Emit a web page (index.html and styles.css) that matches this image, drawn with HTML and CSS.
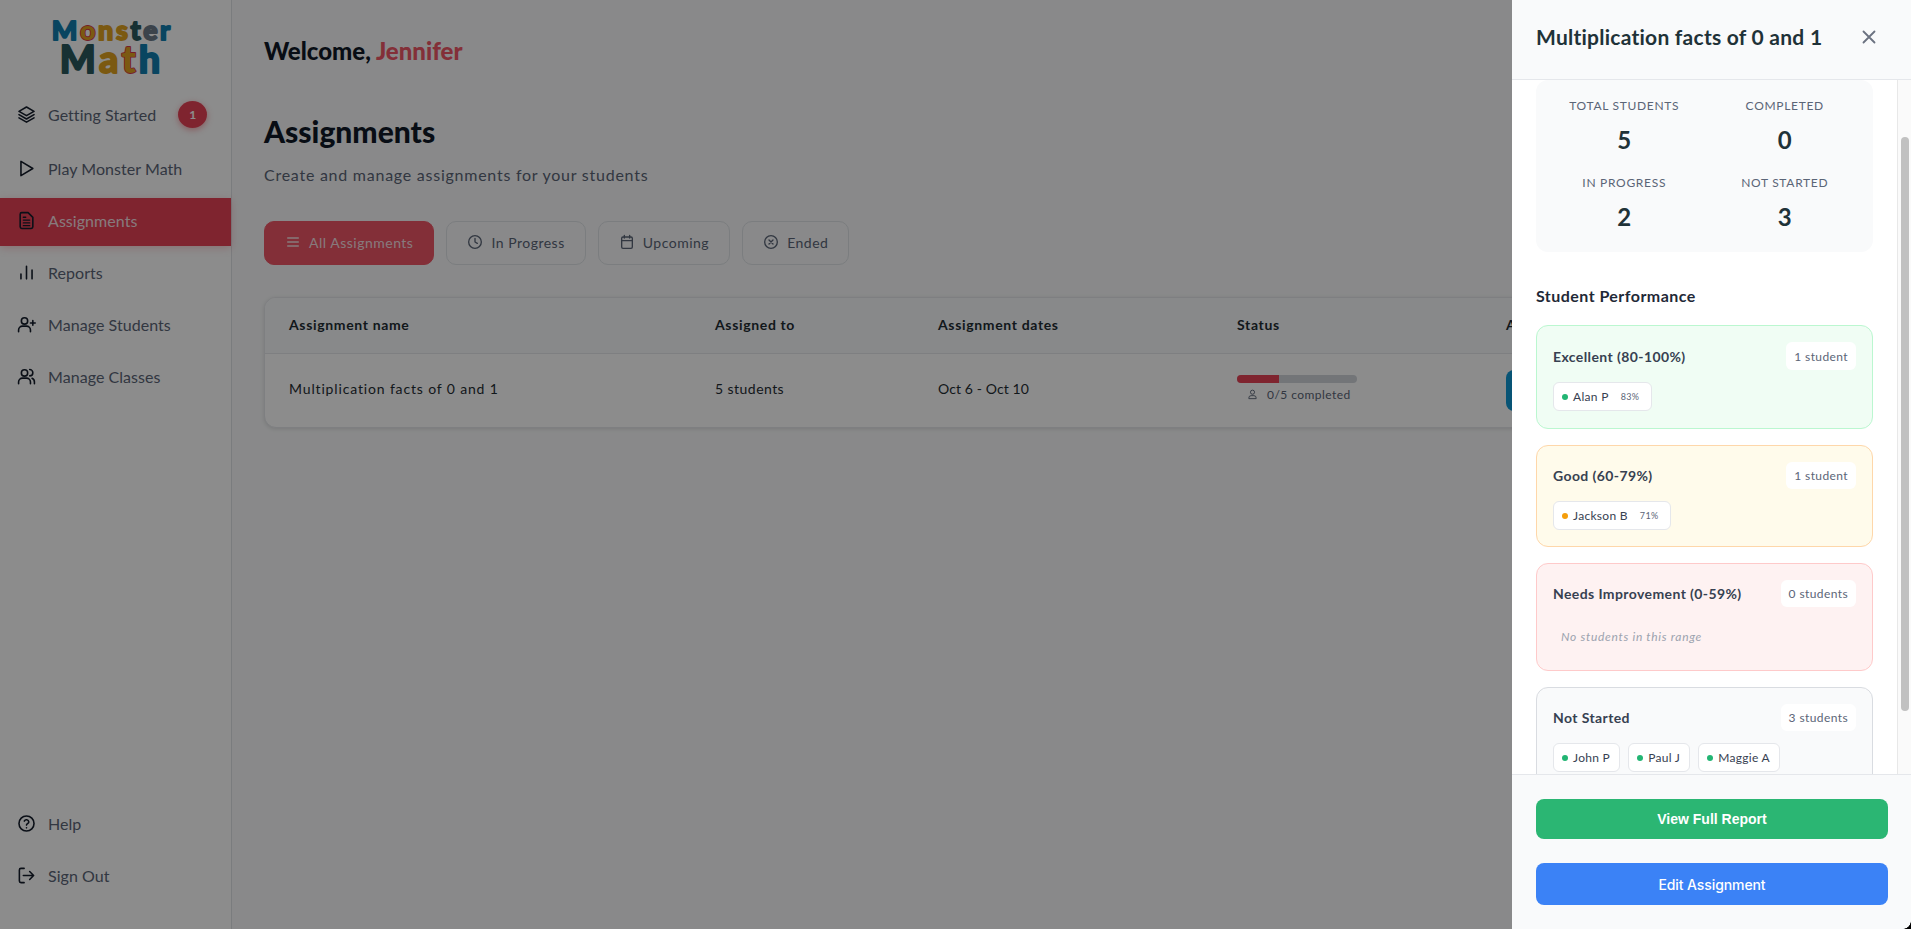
FILE: index.html
```html
<!DOCTYPE html>
<html lang="en">
<head>
<meta charset="utf-8">
<title>Monster Math - Assignments</title>
<link rel="stylesheet" href="styles.css">
</head>
<body>
<div class="app">
  <aside class="sidebar">
    <svg class="logo" viewBox="0 0 232 92" role="img" aria-label="Monster Math">
      <text class="logo-top" x="52" y="40" textLength="119" lengthAdjust="spacing"><tspan class="c-blue">M</tspan><tspan class="c-red">o</tspan><tspan class="c-gold">n</tspan><tspan class="c-gold">s</tspan><tspan class="c-teal">t</tspan><tspan class="c-gray">e</tspan><tspan class="c-blue">r</tspan></text>
      <text class="logo-bottom" x="60" y="73" textLength="101" lengthAdjust="spacing"><tspan class="c-teal">M</tspan><tspan class="c-gold">a</tspan><tspan class="c-red">t</tspan><tspan class="c-blue">h</tspan></text>
    </svg>
    <nav class="nav">
      <a class="nav-item nav-first"><svg class="ico" viewBox="0 0 24 24"><path d="M12 2.5 21.5 8 12 13.5 2.5 8Z"/><path d="M2.5 12.2 12 17.7l9.5-5.5"/><path d="M2.5 16.2 12 21.7l9.5-5.5"/></svg><span>Getting Started</span><b class="nav-badge">1</b></a>
      <a class="nav-item"><svg class="ico" viewBox="0 0 24 24"><path d="M5 3v18l15-9Z"/></svg><span>Play Monster Math</span></a>
      <a class="nav-item active"><svg class="ico ico-doc" viewBox="0 0 24 24"><path class="doc" d="M4 4a2 2 0 0 1 2-2h8l6 6v12a2 2 0 0 1-2 2H6a2 2 0 0 1-2-2Z"/><path class="doc-line" d="M8 11.5h8M8 15h8M8 18.500h8M8 8h3"/></svg><span>Assignments</span></a>
      <a class="nav-item"><svg class="ico" viewBox="0 0 24 24"><path d="M5 20v-6M12 20V4M19 20V9"/></svg><span>Reports</span></a>
      <a class="nav-item"><svg class="ico" viewBox="0 0 24 24"><circle cx="9.500" cy="7.500" r="4"/><path d="M2 21v-2a5 5 0 0 1 5-5h5a5 5 0 0 1 5 5v2"/><path d="M20 7v6M17 10h6"/></svg><span>Manage Students</span></a>
      <a class="nav-item"><svg class="ico" viewBox="0 0 24 24"><circle cx="9.500" cy="7.500" r="4"/><path d="M2 21v-2a5 5 0 0 1 5-5h5a5 5 0 0 1 5 5v2"/><path d="M16 3.200a4 4 0 0 1 0 8M19 14.200a5 5 0 0 1 3 4.800v2"/></svg><span>Manage Classes</span></a>
    </nav>
    <nav class="nav nav-bottom">
      <a class="nav-item"><svg class="ico" viewBox="0 0 24 24"><circle cx="12" cy="12" r="9.500"/><path d="M9.200 9a3 3 0 0 1 5.700 1c0 2-2.900 2.500-2.900 4"/><path d="M12 17.500h.01"/></svg><span>Help</span></a>
      <a class="nav-item"><svg class="ico" viewBox="0 0 24 24"><path d="M9 3H5a2 2 0 0 0-2 2v14a2 2 0 0 0 2 2h4"/><path d="M8 12h13M16 7l5 5-5 5"/></svg><span>Sign Out</span></a>
    </nav>
  </aside>

  <main class="main">
    <h2 class="welcome">Welcome, <span class="accent">Jennifer</span></h2>
    <h1 class="title">Assignments</h1>
    <p class="subtitle">Create and manage assignments for your students</p>
    <div class="tabs">
      <button class="tab tab-on"><svg class="tab-ico" viewBox="0 0 24 24"><path d="M4 6h16M4 12h16M4 18h16"/></svg>All Assignments</button>
      <button class="tab"><svg class="tab-ico" viewBox="0 0 24 24"><circle cx="12" cy="12" r="9.500"/><path d="M12 6.500V12l3.500 2"/></svg>In Progress</button>
      <button class="tab"><svg class="tab-ico" viewBox="0 0 24 24"><rect x="4" y="4.500" width="16" height="17" rx="2"/><path d="M8 2v4M16 2v4M4 10h16"/></svg>Upcoming</button>
      <button class="tab"><svg class="tab-ico" viewBox="0 0 24 24"><circle cx="12" cy="12" r="9.500"/><path d="m9 9 6 6M15 9l-6 6"/></svg>Ended</button>
    </div>
    <section class="table">
      <div class="row row-head">
        <div>Assignment name</div><div>Assigned to</div><div>Assignment dates</div><div>Status</div><div>Actions</div>
      </div>
      <div class="row row-body">
        <div class="cell-name">Multiplication facts of 0 and 1</div>
        <div>5 students</div>
        <div class="cell-dates">Oct 6 - Oct 10</div>
        <div class="status">
          <div class="bar"><div class="bar-fill"></div></div>
          <div class="status-text"><svg class="mini-ico" viewBox="0 0 24 24"><circle cx="12" cy="7" r="4.500"/><path d="M4 21v-1.500a5 5 0 0 1 5-5h6a5 5 0 0 1 5 5V21Z"/></svg>0/5 completed</div>
        </div>
        <div><button class="row-action">View</button></div>
      </div>
    </section>
  </main>
</div>

<div class="overlay"></div>

<aside class="panel">
  <header class="panel-head">
    <h2 class="panel-title">Multiplication facts of 0 and 1</h2>
    <svg class="close" viewBox="0 0 24 24"><path d="M6 6l12 12M18 6 6 18"/></svg>
  </header>
  <div class="panel-body">
    <div class="panel-content">
      <div class="stats">
        <div class="stat"><div class="stat-label">TOTAL STUDENTS</div><div class="stat-value">5</div></div>
        <div class="stat"><div class="stat-label">COMPLETED</div><div class="stat-value">0</div></div>
        <div class="stat"><div class="stat-label">IN PROGRESS</div><div class="stat-value">2</div></div>
        <div class="stat"><div class="stat-label">NOT STARTED</div><div class="stat-value">3</div></div>
      </div>
      <h3 class="perf-title">Student Performance</h3>
      <div class="card card-green">
        <div class="card-head"><h4>Excellent (80-100%)</h4><span class="count">1 student</span></div>
        <div class="chips"><span class="chip"><i class="dot"></i>Alan P<small>83%</small></span></div>
      </div>
      <div class="card card-yellow">
        <div class="card-head"><h4>Good (60-79%)</h4><span class="count">1 student</span></div>
        <div class="chips"><span class="chip"><i class="dot dot-orange"></i>Jackson B<small>71%</small></span></div>
      </div>
      <div class="card card-red">
        <div class="card-head"><h4>Needs Improvement (0-59%)</h4><span class="count">0 students</span></div>
        <p class="empty">No students in this range</p>
      </div>
      <div class="card card-gray">
        <div class="card-head"><h4>Not Started</h4><span class="count">3 students</span></div>
        <div class="chips"><span class="chip"><i class="dot"></i>John P</span><span class="chip"><i class="dot"></i>Paul J</span><span class="chip"><i class="dot"></i>Maggie A</span></div>
      </div>
    </div>
    <div class="scroll-track"><div class="scroll-thumb"></div></div>
  </div>
  <footer class="panel-foot">
    <button class="foot-btn btn-green">View Full Report</button>
    <button class="foot-btn btn-blue">Edit Assignment</button>
  </footer>
  <div class="corner"></div>
</aside>
</body>
</html>
```
FILE: styles.css
```css
* { box-sizing: border-box; }
html, body { margin: 0; height: 100%; overflow: hidden; }
body { font-family: "Lato", "Noto Sans", sans-serif; color: #1f2d33; background: #f9fafb; }
h1, h2, h3, h4, p { margin: 0; }
button { font-family: inherit; border: 0; padding: 0; }

.app { display: flex; height: 929px; }

.sidebar { width: 232px; flex: none; display: flex; flex-direction: column; background: #fff; border-right: 1px solid #dfe2e6; padding-bottom: 28px; }
.logo { display: block; width: 231px; height: 92px; flex: none; font-family: "Lato", sans-serif; font-weight: 900; }
.logo text { stroke-width: 1.800; stroke-linejoin: round; paint-order: stroke; }
.logo-top { font-size: 27px; }
.logo-bottom { font-size: 38px; }
.c-blue { fill: #127fb0; stroke: #127fb0; }
.c-red { fill: #e0a31f; stroke: #d83a4a; }
.c-gold { fill: #e0a31f; stroke: #e0a31f; }
.c-teal { fill: #2a5a5e; stroke: #2a5a5e; }
.c-gray { fill: #6c7a89; stroke: #6c7a89; }

.nav { display: flex; flex-direction: column; gap: 4px; }
.nav-bottom { margin-top: auto; }
.nav-item { height: 48px; display: flex; align-items: center; gap: 12px; padding: 0 0 3px 17px; font-size: 16px; color: #5b6577; letter-spacing: .05px; }
.nav-first { height: 50px; padding-bottom: 5px; }
.ico { width: 19px; height: 19px; flex: none; fill: none; stroke: #141d2b; stroke-width: 2; stroke-linecap: round; stroke-linejoin: round; }
.nav-badge { margin-left: 10px; width: 29px; height: 27px; border-radius: 50%; background: #e74357; color: #fff; font-size: 12px; font-weight: 700; display: flex; align-items: center; justify-content: center; box-shadow: 0 2px 6px rgba(230,57,70,.45); }
.active { background: #e74357; color: #f6dfe2; box-shadow: 0 2px 8px rgba(230,57,70,.25); width: 231px; }
.doc { fill: #e74357; }
.doc-line { stroke-width: 1.800; }

.main { flex: 1; min-width: 0; padding: 35px 32px 0; }
.welcome { font-size: 24px; line-height: 32px; font-weight: 900; color: #101827; }
.accent { color: #ef5666; }
.title { margin-top: 44px; font-size: 30px; line-height: 40px; font-weight: 900; color: #101827; }
.subtitle { margin-top: 12px; font-size: 16px; line-height: 24px; color: #5b6577; letter-spacing: .75px; }

.tabs { margin-top: 34px; display: flex; gap: 12px; }
.tab { height: 44px; display: flex; align-items: center; gap: 8px; padding: 0 20px 2px; border: 1px solid #e0e3e8; border-radius: 10px; background: #f9fafb; font-size: 14px; color: #5b6577; letter-spacing: .5px; }
.tab-on { background: #ef5666; border-color: #ef5666; color: #f6dfe2; }
.tab-ico { width: 16px; height: 16px; flex: none; fill: none; stroke: currentColor; stroke-width: 2; stroke-linecap: round; stroke-linejoin: round; }

.table { margin-top: 32px; background: #fff; border: 1px solid #e5e7eb; border-radius: 12px; box-shadow: 0 1px 4px rgba(0,0,0,.12); overflow: hidden; }
.row { display: grid; grid-template-columns: 426px 223px 299px 269px 1fr; align-items: center; padding-left: 24px; font-size: 14px; color: #1f2d33; letter-spacing: .45px; }
.row-head { height: 56px; padding-bottom: 2px; background: #f8fafc; border-bottom: 1px solid #e5e7eb; font-weight: 700; letter-spacing: .65px; }
.row-body { height: 73px; padding-bottom: 4px; }
.cell-name { letter-spacing: .85px; }
.cell-dates { letter-spacing: .1px; }
.bar { width: 120px; height: 8px; border-radius: 4px; background: #d1d5db; overflow: hidden; }
.bar-fill { width: 42px; height: 100%; background: #e74357; }
.status-text { margin-top: 4px; padding-left: 10px; display: flex; align-items: center; gap: 9px; font-size: 12px; color: #5b6577; }
.mini-ico { width: 11px; height: 11px; fill: none; stroke: #5b6577; stroke-width: 2; }
.row-action { display: block; margin-top: 4px; width: 90px; height: 41px; border-radius: 8px; background: #1099d6; color: #fff; }

.overlay { position: fixed; inset: 0; background: rgba(0,0,0,.45); }

.panel { position: fixed; top: 0; right: 0; bottom: 0; width: 399px; display: flex; flex-direction: column; background: #fff; }
.panel-head { height: 80px; flex: none; display: flex; align-items: center; justify-content: space-between; padding: 0 31px 6px 24px; background: #f9fafb; border-bottom: 1px solid #e5e7eb; }
.panel-title { font-size: 21px; line-height: 28px; font-weight: 700; color: #1f3238; letter-spacing: .25px; }
.close { width: 22px; height: 22px; fill: none; stroke: #6b7280; stroke-width: 2; stroke-linecap: round; }

.panel-body { flex: 1; min-height: 0; display: flex; overflow: hidden; }
.panel-content { flex: 1; min-width: 0; padding: 0 24px; overflow: hidden; }
.scroll-track { position: relative; width: 14px; flex: none; background: #fafafa; border-left: 1px solid #e8e8e8; }
.scroll-thumb { position: absolute; top: 57px; left: 3px; width: 8px; height: 574px; border-radius: 4px; background: #c1c1c1; }

.stats { display: grid; grid-template-columns: 1fr 1fr; gap: 13px 16px; padding: 16px 16px 15px; background: #f9fafb; border-radius: 12px; text-align: center; }
.stat-label { font-size: 12px; line-height: 20px; color: #5b6577; letter-spacing: .7px; }
.stat-value { margin-top: 4px; font-size: 24px; line-height: 40px; font-weight: 700; color: #1f3238; }

.perf-title { margin: 32px 0 17px; font-size: 16px; line-height: 24px; font-weight: 700; color: #1f2937; letter-spacing: .45px; }

.card { margin-bottom: 16px; padding: 16px; border: 1px solid; border-radius: 12px; }
.card-green { background: #f0fdf4; border-color: #bbf7d0; padding-bottom: 17px; }
.card-yellow { background: #fffbeb; border-color: #fed7aa; }
.card-red { background: #fef2f2; border-color: #fecaca; height: 108px; }
.card-gray { background: #f9fafb; border-color: #d9dce1; }
.card-head { display: flex; align-items: center; justify-content: space-between; }
.card-head h4 { font-size: 14px; font-weight: 700; color: #374151; letter-spacing: .4px; }
.count { height: 27px; display: flex; align-items: center; padding: 0 8px; background: #fff; border-radius: 6px; font-size: 12px; color: #5b6577; letter-spacing: .4px; }
.card-green .count { height: 28px; }
.chips { margin-top: 12px; display: flex; gap: 8px; }
.chip { height: 29px; display: flex; align-items: center; padding: 0 9px 0 8px; background: #fff; border: 1px solid #e5e7eb; border-radius: 6px; font-size: 12px; color: #374151; letter-spacing: .3px; }
.chip small { margin: 0 3px 0 12px; font-size: 9px; color: #5b6577; }
.dot { width: 6px; height: 6px; margin-right: 5px; border-radius: 50%; background: #22b573; }
.dot-orange { background: #f59e0b; }
.empty { margin: 22px 0 0 8px; font-size: 12px; line-height: 16px; font-style: italic; color: #9ca3af; letter-spacing: .7px; }

.panel-foot { flex: none; height: 155px; padding: 24px 23px 24px 24px; display: flex; flex-direction: column; gap: 24px; background: #f9fafb; border-top: 1px solid #e5e7eb; }
.foot-btn { border-radius: 8px; color: #fff; font-size: 14px; text-align: center; }
.btn-green { height: 40px; background: #2bb673; font-family: "Liberation Sans", sans-serif; font-weight: 700; }
.btn-blue { height: 42px; background: #3b82f6; font-family: "Inter", sans-serif; font-weight: 500; letter-spacing: -.1px; }
.corner { position: absolute; right: 0; bottom: 0; width: 8px; height: 8px; background: radial-gradient(circle at 0 0, transparent 7.500px, #000 8px); }
```
